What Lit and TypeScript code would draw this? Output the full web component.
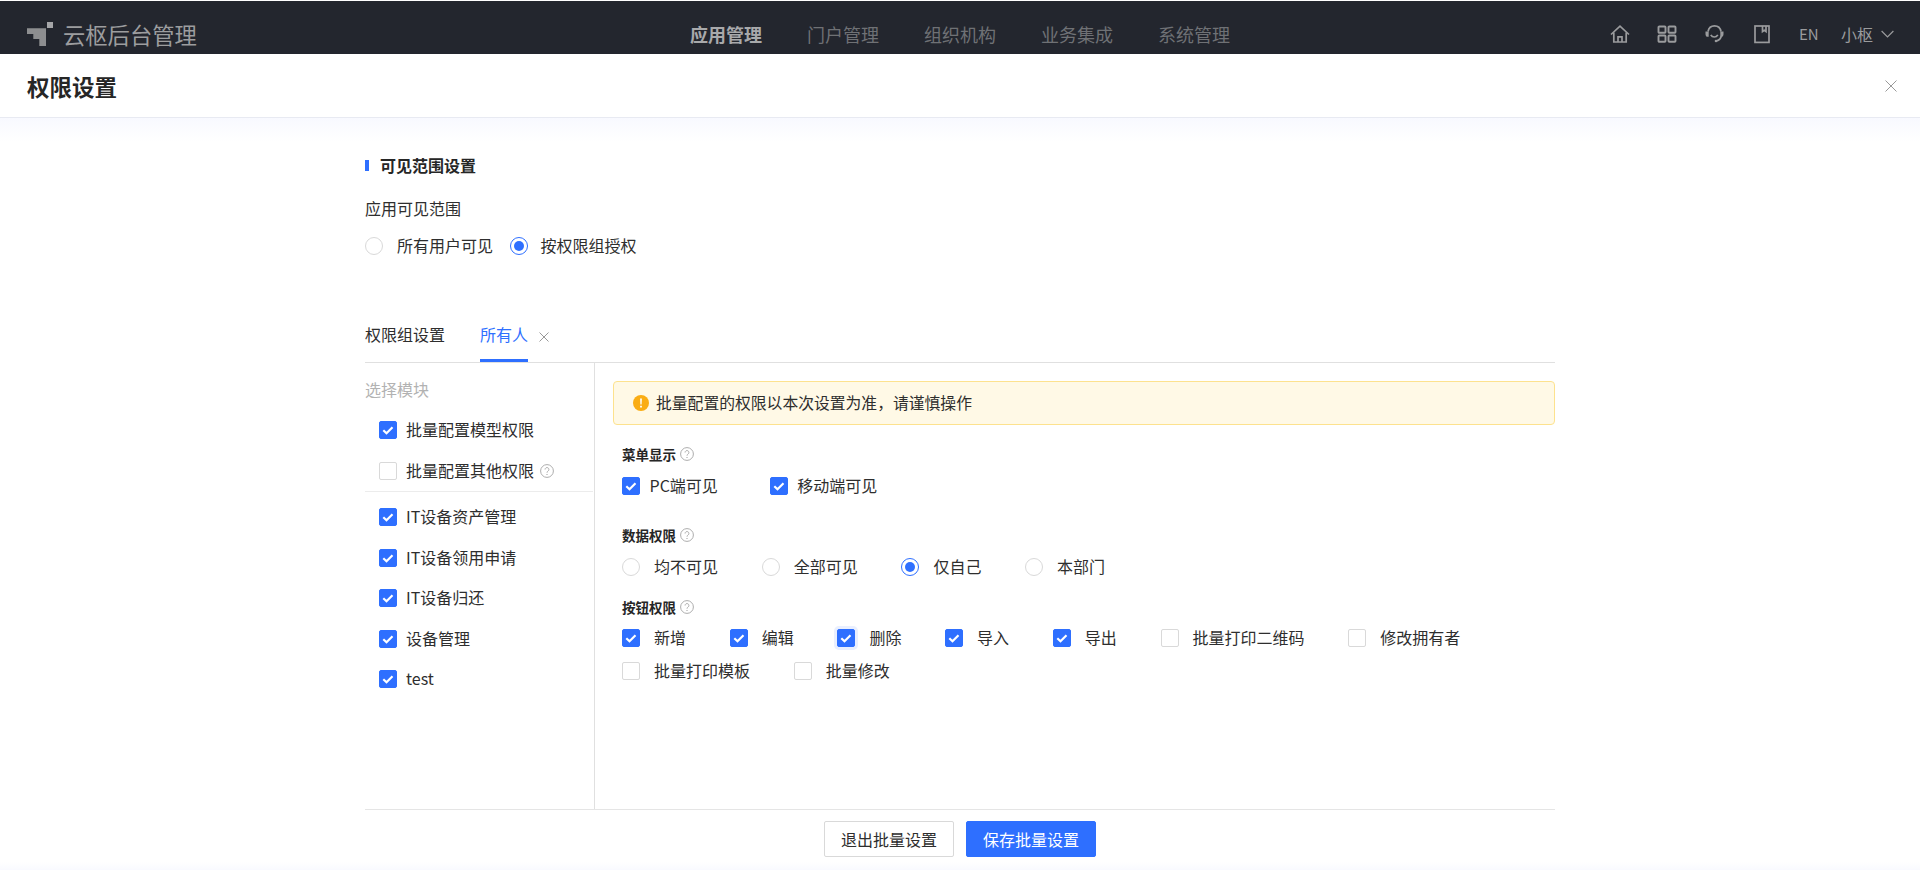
import { LitElement, html, css } from "lit";
import { customElement } from "lit/decorators.js";

const help = html`<svg class="help" viewBox="0 0 14 14" fill="none" stroke="#adadad" stroke-width="1">
  <circle cx="7" cy="7" r="6.4"></circle>
  <path d="M5.100 5.500a1.900 1.900 0 1 1 3 1.500c-.7.5-1.100.9-1.100 1.700"></path>
  <path d="M7 9.900v1.100" stroke-width="1.200"></path>
</svg>`;

const check = (on: boolean, extra = "") => html`<span class="cb ${on ? "on" : ""} ${extra}">
  ${on
    ? html`<svg viewBox="0 0 18 18" fill="none" stroke="#fff" stroke-width="2.200"><path d="M4.300 9.200l3.200 3 6-6"></path></svg>`
    : ""}
</span>`;

const radio = (on: boolean) => html`<span class="rd ${on ? "on" : ""}"></span>`;

const alertText = "批量配置的权限以本次设置为准\uFF0C请谨慎操作";

@customElement("app-root")
export class AppRoot extends LitElement {
  static styles = css`
    :host {
      display: flex;
      flex-direction: column;
      height: 870px;
      box-sizing: border-box;
      padding-top: 1px;
      background: #fff;
      color: #2e2e2e;
      font-family: "Noto Sans CJK SC", "Noto Sans", sans-serif;
      font-size: 16px;
      overflow: hidden;
    }
    * { box-sizing: border-box; }
    .top {
      height: 53px;
      flex: none;
      background: #23262e;
      display: grid;
      grid-template-columns: 1fr auto 1fr;
      align-items: center;
      padding-top: 12px;
    }
    .brand {
      display: flex;
      align-items: center;
      gap: 10px;
      padding-left: 27px;
      color: #9c9d9f;
      font-size: 22.300px;
      line-height: 30px;
    }
    .brand svg { width: 26px; height: 24px; display: block; margin-top: 1px; }
    .nav {
      display: flex;
      gap: 45px;
      font-size: 18px;
      line-height: 26px;
      color: #6f7175;
    }
    .nav .active { color: #a8a9ab; font-weight: 700; }
    .tools {
      display: flex;
      align-items: center;
      justify-content: flex-end;
      padding-right: 26px;
      color: #9a9b9d;
      margin-top: 1px;
    }
    .tools svg.ic { width: 20px; height: 20px; display: block; margin-right: 27.500px; }
    .tools .en { font-size: 15px; line-height: 20px; margin: 0 22px 0 -1px; width: 20px; }
    .tools .user { font-size: 16px; line-height: 22px; margin-right: 8px; }
    .tools .chev { width: 13px; height: 8px; display: block; }
    .title {
      height: 64px;
      flex: none;
      border-bottom: 1px solid #e8eaf2;
      display: flex;
      align-items: center;
      justify-content: space-between;
      padding: 0 23px 0 27px;
    }
    .title h1 {
      margin: 0;
      font-size: 22.500px;
      line-height: 30px;
      font-weight: 700;
      color: #262626;
    }
    .title svg { width: 12px; height: 12px; display: block; }
    .body {
      flex: 1;
      min-height: 0;
      display: flex;
      flex-direction: column;
      padding: 36px 365px 0;
      background:
        linear-gradient(#f8f9ff, #ffffff 24px) top / 100% 24px no-repeat,
        linear-gradient(#ffffff, #f9faff) bottom / 100% 8px no-repeat;
    }
    .sec {
      display: flex;
      align-items: center;
      gap: 11px;
      height: 22px;
      font-size: 16px;
      line-height: 20px;
      font-weight: 700;
      color: #262626;
    }
    .sec i { width: 4px; height: 11px; background: #2e6fff; display: block; }
    .sec span { padding-bottom: 1px; }
    .lbl { margin-top: 20px; height: 24px; line-height: 24px; }
    .scope { display: flex; gap: 16.500px; margin-top: 14px; }
    .opt { display: flex; align-items: center; gap: 14px; height: 24px; white-space: nowrap; }
    .opt span:last-child { line-height: 22px; padding-bottom: 2px; }
    .scope .opt + .opt { gap: 13px; }
    .tabs {
      margin-top: 66px;
      display: flex;
      align-items: flex-start;
      border-bottom: 1px solid #e0e0e0;
      height: 39px;
      flex: none;
      line-height: 20px;
    }
    .tab { height: 38px; }
    .tab.cur {
      margin-left: 35px;
      color: #2e6fff;
      border-bottom: 3px solid #2e6fff;
    }
    .tabx { width: 10px; height: 10px; display: block; margin: 8px 0 0 11px; }
    .split { flex: 1; min-height: 0; display: flex; }
    .left { width: 230px; flex: none; border-right: 1px solid #e0e0e0; padding-top: 15px; }
    .left .hd { color: #b2b2b2; line-height: 22px; margin-bottom: 10px; }
    .row {
      height: 40.500px;
      display: flex;
      align-items: center;
      gap: 9px;
      padding-left: 14px;
    }
    .row span:not(.cb) { line-height: 22px; padding-bottom: 2px; }
    .row .help { margin-left: -3px; }
    .sep { height: 1px; background: #ececec; margin-bottom: 5px; margin-right: 1px; }
    .right { flex: 1; min-width: 0; padding: 18px 0 0 18px; }
    .alert {
      height: 44px;
      display: flex;
      align-items: center;
      gap: 7px;
      padding-left: 19px;
      background: #fff9e6;
      border: 1px solid #fde28e;
      border-radius: 4px;
    }
    .alert svg { width: 16px; height: 16px; display: block; }
    .alert span { font-size: 15.800px; line-height: 22px; padding-bottom: 1px; }
    .group { padding-left: 9px; }
    .gt {
      display: flex;
      align-items: center;
      gap: 4px;
      height: 20px;
      padding-bottom: 2px;
      font-size: 13.500px;
      line-height: 18px;
      font-weight: 700;
      color: #262626;
    }
    .g1 { margin-top: 20px; }
    .g2 { margin-top: 28px; }
    .g3 { margin-top: 19px; }
    .items { display: flex; flex-wrap: wrap; column-gap: 43.700px; row-gap: 9px; margin-top: 9px; }
    .g3 .items { margin-top: 8px; }
    .items.menu { column-gap: 52px; }
    .items.menu .opt { gap: 9.500px; }
    .help { width: 14px; height: 14px; display: block; flex: none; }
    .cb {
      width: 18px;
      height: 18px;
      flex: none;
      display: block;
      border: 1px solid #d9d9d9;
      border-radius: 2px;
      background: #fff;
    }
    .cb.on { background: #2e6fff; border-color: #2e6fff; }
    .cb.focus { box-shadow: 0 0 0 3px #e9efff; }
    .cb svg { display: block; width: 18px; height: 18px; margin: -1px; }
    .rd {
      width: 18px;
      height: 18px;
      flex: none;
      display: flex;
      align-items: center;
      justify-content: center;
      border: 1px solid #d9d9d9;
      border-radius: 50%;
      background: #fff;
    }
    .rd.on { border-color: #2e6fff; }
    .rd.on::after {
      content: "";
      width: 10px;
      height: 10px;
      border-radius: 50%;
      background: #2e6fff;
    }
    .foot {
      flex: none;
      height: 61px;
      border-top: 1px solid #e5e5e5;
      padding-top: 11px;
      display: flex;
      justify-content: center;
      gap: 12px;
    }
    .btn {
      width: 130px;
      height: 36px;
      display: flex;
      align-items: center;
      justify-content: center;
      font-size: 16px;
      border-radius: 2px;
      border: 1px solid #d9d9d9;
      background: #fff;
      color: #2e2e2e;
    }
    .btn.pri { background: #2e6fff; border-color: #2e6fff; color: #fff; }
  `;

  render() {
    const modules = ["IT设备资产管理", "IT设备领用申请", "IT设备归还", "设备管理", "test"];
    const data: [string, boolean][] = [["均不可见", false], ["全部可见", false], ["仅自己", true], ["本部门", false]];
    const perms: [string, boolean][] = [
      ["新增", true], ["编辑", true], ["删除", true], ["导入", true], ["导出", true],
      ["批量打印二维码", false], ["修改拥有者", false], ["批量打印模板", false], ["批量修改", false],
    ];
    return html`
      <header class="top">
        <div class="brand">
          <svg viewBox="0 0 26 24">
            <path d="M0 6.300h19V24h-6.700v-7H6.300v-5H0z" fill="#8d8e90"></path>
            <path d="M20 0h6v6h-6z" fill="#a5a6a8"></path>
          </svg>
          <span>云枢后台管理</span>
        </div>
        <nav class="nav">
          <span class="active">应用管理</span><span>门户管理</span><span>组织机构</span><span>业务集成</span><span>系统管理</span>
        </nav>
        <div class="tools">
          <svg class="ic" viewBox="0 0 20 20" fill="none" stroke="currentColor" stroke-width="1.700">
            <path d="M1 10.500L10 2.200l9 8.300"></path>
            <path d="M3.800 8.500V18h12.400V8.500"></path>
            <path d="M8 18v-5.200h4V18"></path>
          </svg>
          <svg class="ic" viewBox="0 0 20 20" fill="none" stroke="currentColor" stroke-width="1.900">
            <rect x="1.500" y="2.500" width="7" height="6.300" rx=".8"></rect>
            <rect x="11.500" y="2.500" width="7" height="6.300" rx=".8"></rect>
            <rect x="1.500" y="11.500" width="7" height="6.300" rx=".8"></rect>
            <rect x="11.500" y="11.500" width="7" height="6.300" rx=".8"></rect>
          </svg>
          <svg class="ic" viewBox="0 0 20 20" fill="none" stroke="currentColor" stroke-width="1.700">
            <path d="M3 7.500C3.800 3.500 6.200 1.800 9.500 1.800s5.800 1.700 6.500 5.700"></path>
            <path d="M16.300 12c-.5 2.500-2 4.200-4.600 4.800"></path>
            <path d="M5.800 10.800c.8 1.500 2 2.200 3.500 2.200s2.700-.7 3.500-2.200"></path>
            <path d="M.5 7.500h3.200v5.200H1.600C.8 12 .5 11 .5 10z" fill="currentColor" stroke="none"></path>
            <path d="M15.300 7.500h3.200V10c0 1-.3 2-1.100 2.700h-2.100z" fill="currentColor" stroke="none"></path>
            <circle cx="11" cy="17" r="1.300" fill="currentColor" stroke="none"></circle>
          </svg>
          <svg class="ic" viewBox="0 0 20 20" fill="none" stroke="currentColor" stroke-width="1.700">
            <rect x="3" y="2" width="14" height="16.400"></rect>
            <path d="M10.500 2v5.500l1.800-1.300L14 7.500V2"></path>
          </svg>
          <span class="en">EN</span>
          <span class="user">小枢</span>
          <svg class="chev" viewBox="0 0 13 8" fill="none" stroke="currentColor" stroke-width="1.200"><path d="M.6 1l5.900 6 5.900-6"></path></svg>
        </div>
      </header>
      <div class="title">
        <h1>权限设置</h1>
        <svg viewBox="0 0 12 12" fill="none" stroke="#999" stroke-width="1"><path d="M.5.500l11 11M11.500.500l-11 11"></path></svg>
      </div>
      <main class="body">
        <div class="sec"><i></i><span>可见范围设置</span></div>
        <div class="lbl">应用可见范围</div>
        <div class="scope">
          <label class="opt">${radio(false)}<span>所有用户可见</span></label>
          <label class="opt">${radio(true)}<span>按权限组授权</span></label>
        </div>
        <div class="tabs">
          <div class="tab">权限组设置</div>
          <div class="tab cur">所有人</div>
          <svg class="tabx" viewBox="0 0 10 10" fill="none" stroke="#999" stroke-width="1"><path d="M.5.500l9 9M9.500.500l-9 9"></path></svg>
        </div>
        <div class="split">
          <aside class="left">
            <div class="hd">选择模块</div>
            <div class="row">${check(true)}<span>批量配置模型权限</span></div>
            <div class="row">${check(false)}<span>批量配置其他权限</span>${help}</div>
            <div class="sep"></div>
            ${modules.map((m) => html`<div class="row">${check(true)}<span>${m}</span></div>`)}
          </aside>
          <section class="right">
            <div class="alert">
              <svg viewBox="0 0 16 16">
                <circle cx="8" cy="8" r="8" fill="#faad14"></circle>
                <path d="M7.100 3.500h1.800l-.3 6H7.400zM7.100 10.700h1.800v1.800H7.100z" fill="#fff"></path>
              </svg>
              <span>${alertText}</span>
            </div>
            <div class="group g1">
              <div class="gt"><span>菜单显示</span>${help}</div>
              <div class="items menu">
                <label class="opt">${check(true)}<span>PC端可见</span></label>
                <label class="opt">${check(true)}<span>移动端可见</span></label>
              </div>
            </div>
            <div class="group g2">
              <div class="gt"><span>数据权限</span>${help}</div>
              <div class="items">
                ${data.map(([t, on]) => html`<label class="opt">${radio(on)}<span>${t}</span></label>`)}
              </div>
            </div>
            <div class="group g3">
              <div class="gt"><span>按钮权限</span>${help}</div>
              <div class="items">
                ${perms.map(([t, on]) => html`<label class="opt">${check(on, t === "删除" ? "focus" : "")}<span>${t}</span></label>`)}
              </div>
            </div>
          </section>
        </div>
        <footer class="foot">
          <div class="btn">退出批量设置</div>
          <div class="btn pri">保存批量设置</div>
        </footer>
      </main>
    `;
  }
}
